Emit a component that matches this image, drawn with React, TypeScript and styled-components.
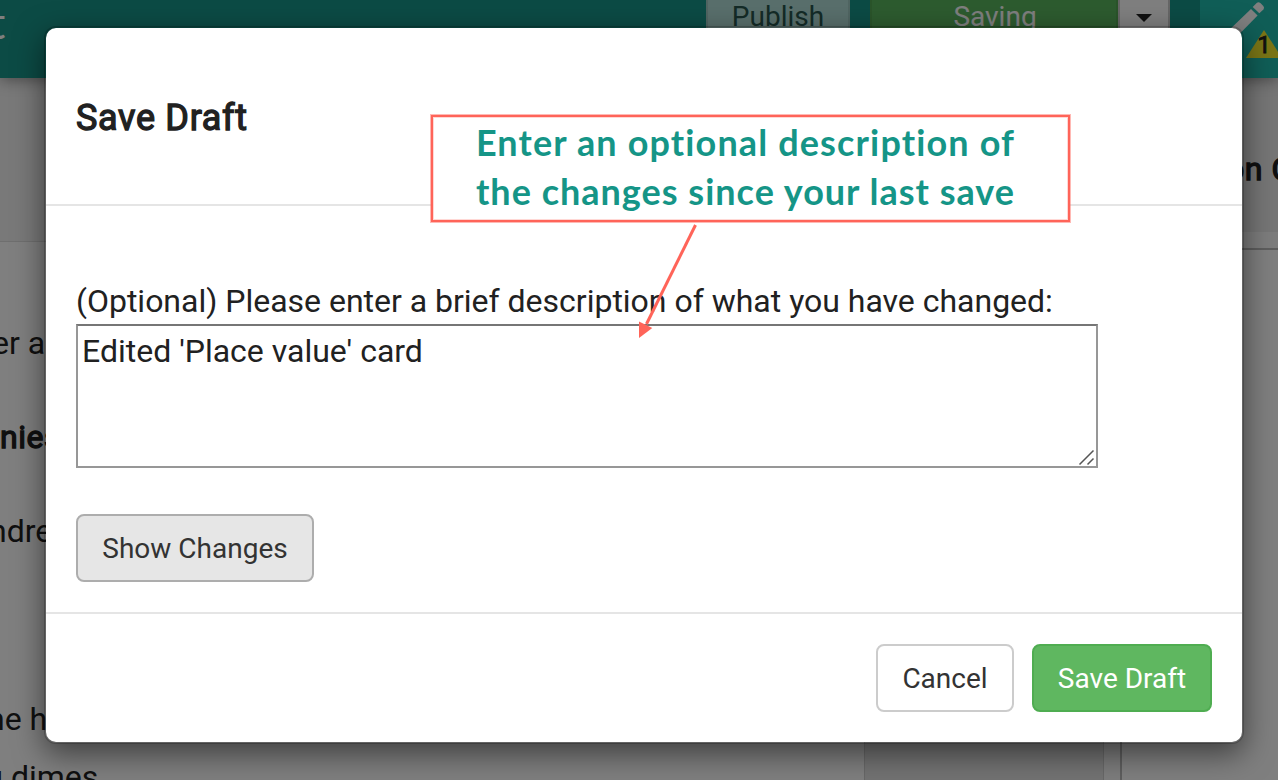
import React from "react";
import styled, { createGlobalStyle, css } from "styled-components";

const Global = createGlobalStyle`
  * { box-sizing: border-box; }
  body {
    margin: 0;
    font-family: Roboto, "Liberation Sans", sans-serif;
    color: #212121;
    overflow: hidden;
  }
`;

const heavy = css`
  font-weight: 400;
  letter-spacing: 0.55px;
  -webkit-text-stroke: 1.3px currentColor;
`;

const Screen = styled.div`
  position: relative;
  width: 1278px;
  height: 780px;
  overflow: hidden;
  background: #fff;
`;

const TopBar = styled.header`
  position: relative;
  display: flex;
  height: 78px;
  background: #18968a;
  box-shadow: 0 2px 14px rgba(0, 0, 0, 0.4);
`;

const Brand = styled.div`
  width: 706px;
  overflow: hidden;
  font: 400 44px/44px Lato, sans-serif;
  color: #fff;
  text-indent: -10.5px;
`;

const BarButton = styled.div<{ $w: number; $bg: string; $fg: string; $edge: string; $gap?: number; $nudge?: number }>`
  display: flex;
  justify-content: center;
  width: ${(p) => p.$w}px;
  height: 50px;
  margin-right: ${(p) => p.$gap ?? 0}px;
  padding-left: ${(p) => p.$nudge ?? 0}px;
  border: solid ${(p) => p.$edge};
  border-width: 0 2px 2px;
  background: ${(p) => p.$bg};
  color: ${(p) => p.$fg};
  font-size: 28px;
  line-height: 33px;
`;

const Caret = styled.span`
  width: 0;
  height: 0;
  margin-top: 14px;
  border: 8px solid transparent;
  border-top-color: #212121;
  border-bottom: 0;
`;

const EditTab = styled.div`
  width: 78px;
  height: 78px;
  background: #20bdaf;
  svg { display: block; }
`;

const Columns = styled.div`
  display: flex;
  height: 702px;
`;

const Article = styled.main`
  width: 864px;
  padding-top: 163px;
  background: #f2f2f2;
`;

const ArticleBody = styled.div`
  height: 539px;
  border-top: 1px solid #dedede;
  background: #fff;
  padding-top: 83px;
`;

const Line = styled.p<{ $shift: number; $gap?: number; $bold?: boolean }>`
  margin: 0 0 ${(p) => p.$gap ?? 57}px;
  text-indent: ${(p) => p.$shift}px;
  font-size: 32px;
  line-height: 37px;
  white-space: nowrap;
  ${(p) => p.$bold && heavy}
`;

const Middle = styled.div`
  width: 240px;
  background: #e6e6e6;
  border-left: 1px solid #d0d0d0;
  border-right: 1px solid #d0d0d0;
`;

const Side = styled.aside`
  width: 174px;
  background: #fafafa;
`;

const SideHead = styled.div`
  height: 154px;
  padding: 73px 0 0 122px;
  background: #ececec;
  font-size: 32px;
  line-height: 37px;
  white-space: nowrap;
  overflow: hidden;
  ${heavy}
`;

const SideCard = styled.div`
  height: 540px;
  margin: 16px 0 0 16px;
  border: solid #bdbdbd;
  border-width: 2px 0 0 2px;
  background: #fff;
`;

const Backdrop = styled.div`
  position: absolute;
  inset: 0;
  display: flex;
  justify-content: center;
  align-items: flex-start;
  padding: 26px 0 0 10px;
  background: rgba(0, 0, 0, 0.5);
`;

const Modal = styled.section`
  width: 1200px;
  height: 718px;
  border: 2px solid rgba(0, 0, 0, 0.2);
  border-radius: 12px;
  background: #fff;
  background-clip: padding-box;
  box-shadow: 0 10px 30px rgba(0, 0, 0, 0.5);
`;

const ModalHeader = styled.div`
  height: 178px;
  padding: 68px 30px 0;
  border-bottom: 2px solid #e5e5e5;
`;

const Title = styled.h4`
  margin: 0;
  font-size: 36px;
  line-height: 44px;
  ${heavy}
  letter-spacing: 0.68px;
`;

const ModalBody = styled.div`
  height: 406px;
  padding: 75px 30px 0;
`;

const Label = styled.label`
  display: block;
  height: 41px;
  font-size: 32px;
  line-height: 40px;
  letter-spacing: -0.012px;
  white-space: nowrap;
`;

const Field = styled.div`
  position: relative;
  width: 1022px;
  height: 144px;
  margin: 2px 0 46px;
  svg {
    position: absolute;
    right: 2px;
    bottom: 2px;
  }
`;

const TextArea = styled.textarea`
  display: block;
  width: 100%;
  height: 100%;
  padding: 6px 4px;
  border: 2px solid #979797;
  border-top-color: #767676;
  border-radius: 0;
  outline: 0;
  resize: none;
  overflow: hidden;
  background: #fff;
  color: #212121;
  font: 400 32px/38px Roboto, sans-serif;
`;

const Button = styled.button<{ $w: number; $bg: string; $edge: string; $fg?: string }>`
  width: ${(p) => p.$w}px;
  height: 68px;
  padding: 1px 0 0;
  border: 2px solid ${(p) => p.$edge};
  border-radius: 8px;
  background: ${(p) => p.$bg};
  color: ${(p) => p.$fg ?? "#333"};
  font: 400 28px/40px Roboto, sans-serif;
`;

const ModalFooter = styled.div`
  display: flex;
  justify-content: flex-end;
  gap: 18px;
  padding: 30px;
  border-top: 2px solid #e5e5e5;
`;

const Callout = styled.div`
  position: absolute;
  left: 431px;
  top: 115px;
  width: 639px;
  height: 107px;
  padding: 1px 10px 0 0;
  border: 2px solid #ff6459;
  box-shadow: 0 0 0 1px rgba(255, 100, 89, 0.45), inset 0 0 0 1px rgba(255, 100, 89, 0.25);
  background: #fff;
  color: #159587;
  text-align: center;
  font: 700 36px/49px Lato, sans-serif;
  white-space: nowrap;
`;

const CalloutLine = styled.div<{ $track: number }>`
  letter-spacing: ${(p) => p.$track}px;
`;

const Arrow = styled.svg`
  position: absolute;
  left: 630px;
  top: 220px;
`;

export default function App() {
  return (
    <Screen>
      <Global />
      <TopBar>
        <Brand>t</Brand>
        <BarButton $w={144} $gap={20} $bg="#b3dfd8" $fg="#28564f" $edge="#a0cbc5">Publish</BarButton>
        <BarButton $w={248} $nudge={2} $bg="#5bb75f" $fg="#fff" $edge="#54a954">Saving</BarButton>
        <BarButton $w={52} $gap={30} $bg="#fff" $fg="#333" $edge="#ccc"><Caret /></BarButton>
        <EditTab>
          <svg width="78" height="78" viewBox="0 0 78 78">
            <path d="M51 9 57.6 15.6 36 37.5 24 40 25.5 33.5Z" fill="#fff" />
            <path d="M52.7 6.9 59.3 13.3 63.4 9.4Q64.8 7.8 63.3 6.1L60.4 3.1Q58.5 1.3 56.7 2.9Z" fill="#fff" />
            <path d="M64 30 82 58H46Z" fill="#f5ea2c" />
            <text x="64" y="52.5" textAnchor="middle" fontSize="24" fill="#212121" stroke="#212121" strokeWidth="0.8">1</text>
          </svg>
        </EditTab>
      </TopBar>
      <Columns>
        <Article>
          <ArticleBody>
            <Line $shift={-8}>er a</Line>
            <Line $shift={0} $bold>nies</Line>
            <Line $shift={-11} $gap={151}>ndre</Line>
            <Line $shift={-13} $gap={21}>he h</Line>
            <Line $shift={-15}>g dimes</Line>
          </ArticleBody>
        </Article>
        <Middle />
        <Side>
          <SideHead>on Cards</SideHead>
          <SideCard />
        </Side>
      </Columns>
      <Backdrop>
        <Modal>
          <ModalHeader>
            <Title>Save Draft</Title>
          </ModalHeader>
          <ModalBody>
            <Label>(Optional) Please enter a brief description of what you have changed:</Label>
            <Field>
              <TextArea defaultValue="Edited 'Place value' card" spellCheck={false} />
              <svg width="18" height="18" viewBox="0 0 18 18" stroke="#555" strokeWidth="1.5">
                <path d="M1.5 16.5 15.5 2.5M9.5 16.5 15.5 10.5" />
              </svg>
            </Field>
            <Button $w={238} $bg="#e6e6e6" $edge="#adadad">Show Changes</Button>
          </ModalBody>
          <ModalFooter>
            <Button $w={138} $bg="#fff" $edge="#ccc">Cancel</Button>
            <Button $w={180} $bg="#5fb760" $edge="#4fad51" $fg="#fff">Save Draft</Button>
          </ModalFooter>
        </Modal>
      </Backdrop>
      <Callout>
        <CalloutLine $track={1.13}>Enter an optional description of</CalloutLine>
        <CalloutLine $track={1}>the changes since your last save</CalloutLine>
      </Callout>
      <Arrow width="75" height="125" viewBox="0 0 75 125">
        <path d="M65.5 5 16.5 104" stroke="#ff6459" strokeWidth="3" />
        <path d="M9 101.5 22.3 108 9 118Z" fill="#ff6459" />
      </Arrow>
    </Screen>
  );
}
